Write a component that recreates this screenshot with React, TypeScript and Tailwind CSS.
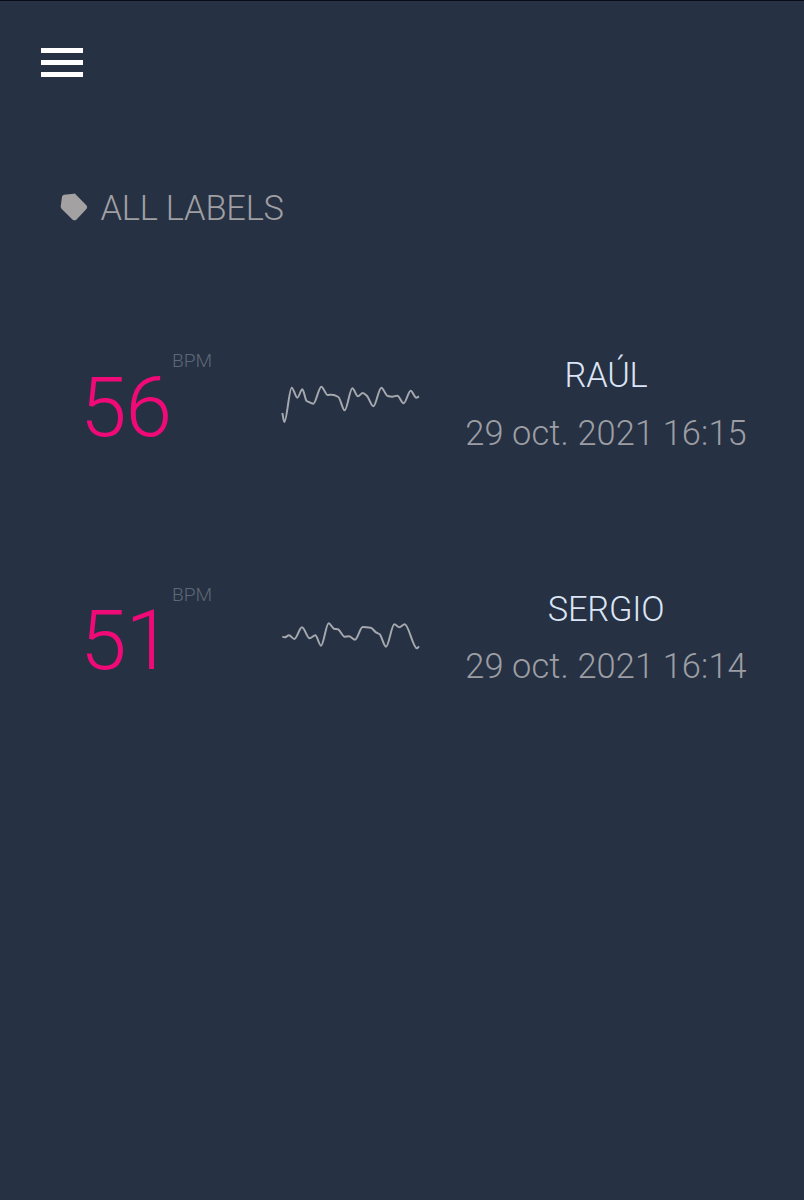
import React from "react";

type Point = [number, number];

interface Measurement {
  bpm: number;
  name: string;
  date: string;
  wave: Point[];
}

const measurements: Measurement[] = [
  {
    bpm: 56,
    name: "RAÚL",
    date: "29 oct. 2021 16:15",
    wave: [
      [37, 129], [43, 156], [65, 53], [82, 83], [97, 58], [110, 93], [119, 97], [130, 101],
      [154, 50], [173, 75], [185, 74], [205, 81], [224, 121], [247, 55], [264, 79], [278, 69],
      [291, 78], [310, 109], [334, 53], [353, 78], [367, 80], [382, 77], [401, 100], [422, 62],
      [439, 83], [447, 79],
    ],
  },
  {
    bpm: 51,
    name: "SERGIO",
    date: "29 oct. 2021 16:14",
    wave: [
      [37, 98], [44, 100], [57, 94], [73, 105], [96, 70], [119, 103], [136, 94], [153, 125],
      [176, 58], [192, 74], [204, 76], [224, 98], [237, 97], [255, 107], [278, 69], [302, 71],
      [318, 85], [329, 91], [348, 128], [373, 61], [388, 70], [404, 61], [441, 133], [447, 127],
    ],
  },
];

// Cubic curve through the samples, flat at each peak and trough.
function curve(points: Point[]): string {
  const slope = (i: number) => {
    if (i === 0 || i === points.length - 1) {
      const a = points[i === 0 ? 0 : i - 1];
      const b = points[i === 0 ? 1 : i];
      return (b[1] - a[1]) / (b[0] - a[0]);
    }
    const l = (points[i][1] - points[i - 1][1]) / (points[i][0] - points[i - 1][0]);
    const r = (points[i + 1][1] - points[i][1]) / (points[i + 1][0] - points[i][0]);
    return l * r <= 0 ? 0 : (2 * l * r) / (l + r);
  };
  let d = `M${points[0][0]} ${points[0][1]}`;
  for (let i = 1; i < points.length; i++) {
    const [x0, y0] = points[i - 1];
    const [x1, y1] = points[i];
    const h = (x1 - x0) / 3;
    d += `C${x0 + h} ${y0 + slope(i - 1) * h} ${x1 - h} ${y1 - slope(i) * h} ${x1} ${y1}`;
  }
  return d;
}

function MeasurementRow({ bpm, name, date, wave }: Measurement) {
  return (
    <li className="flex h-[233.7px] items-start">
      <div className="flex w-[190px] items-start">
        <span className="mt-[15.5px] w-[92px] text-[84px] leading-[84px] tracking-[-1.2px] text-[#f00a78]">{bpm}</span>
        <span className="mt-px text-[19.2px] leading-5 text-[#5f6876]">BPM</span>
      </div>
      <svg className="mt-5 h-[70px] w-[160px]" viewBox="0 0 480 210" fill="none">
        <path d={curve(wave)} stroke="#a5a8ae" strokeWidth="6" strokeLinejoin="round" />
      </svg>
      <div className="ml-[26px] mt-[5px] flex w-[300px] flex-col items-center whitespace-nowrap text-[34.4px] leading-10">
        <span className="tracking-[-0.2px] text-[#dbe5f5]">{name}</span>
        <span className="mt-[17.5px] tracking-[0.12px] text-[#9c9ea3]">{date}</span>
      </div>
    </li>
  );
}

export default function App() {
  return (
    <main className="flex h-[1200px] w-[804px] flex-col overflow-hidden border-t border-[#080c19] bg-[#263143] font-['Roboto',sans-serif] font-light">
      <button aria-label="Menu" className="ml-[41.4px] mt-[47px] flex h-[29px] w-[42px] flex-col justify-between">
        <span className="h-[5px] w-full bg-white" />
        <span className="h-[5px] w-full bg-white" />
        <span className="h-[5px] w-full bg-white" />
      </button>
      <div className="ml-[60px] mt-[111px] flex h-10 items-start">
        <svg className="mt-[5px] h-[28px] w-[28px]" viewBox="0 0 84 84" fill="#a3a1a1">
          <path d="M12 5L41 2Q45 1 48 5L79 37Q84 42 80 47L49 80Q44 84 38 80L6 49Q3 46 2 41L6 11Q7 6 12 5Z" />
        </svg>
        <span className="ml-[12.5px] text-[34.4px] leading-10 tracking-[-0.2px] text-[#a09fa2]">ALL LABELS</span>
      </div>
      <ul className="ml-[80px] mt-[122px]">
        {measurements.map((m) => (
          <MeasurementRow key={m.name} {...m} />
        ))}
      </ul>
    </main>
  );
}
